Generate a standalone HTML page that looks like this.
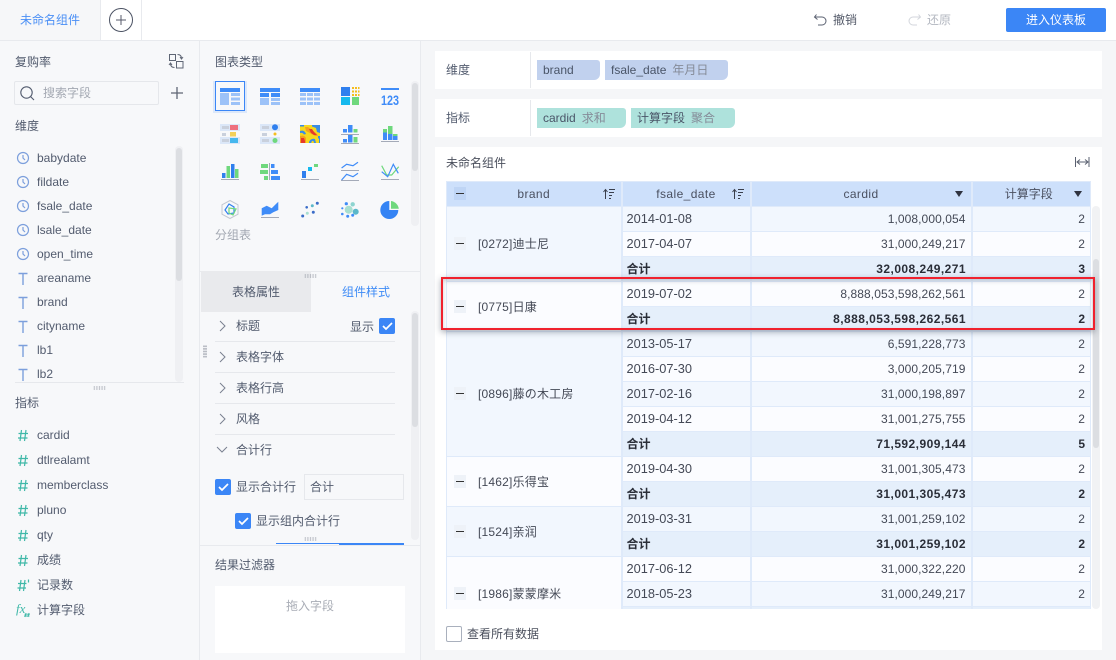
<!DOCTYPE html>
<html lang="zh"><head><meta charset="utf-8"><title>未命名组件</title>
<style>
*{box-sizing:border-box;margin:0;padding:0}
html,body{width:1116px;height:660px;overflow:hidden;background:#f5f6f8}
body{position:relative;font:12px/16px "Liberation Sans","Noto Sans CJK SC",sans-serif;color:#525b6e}
.a{position:absolute}
.t{position:absolute;white-space:nowrap;line-height:16px}
.f{position:absolute;left:37px;white-space:nowrap;line-height:16px}
.c{position:absolute;left:215px;width:16px;height:16px;background:#3b86f6;border-radius:2px}
.sb{position:absolute;width:8px;background:#eff0f3;border-radius:4px}
.sb i{position:absolute;left:1px;width:6px;background:#dcdee2;border-radius:3px;display:block}
.hl{position:absolute;left:215px;width:180px;height:1px;background:#e6e8ec}
.chip{position:absolute;height:20px;line-height:20px;padding-left:6px;border-radius:0 3px 6px 0;white-space:nowrap;color:#4a5568}
.chip b{font-weight:normal;color:#858b98;margin-left:6px}
table{border-collapse:collapse;table-layout:fixed;width:644px;font-size:12px;color:#444956}
td,th{height:25px;border:1px solid #dfeafa;border-left-width:2px;padding:0 5px;font-weight:inherit;white-space:nowrap;overflow:hidden}
td.g,th.h1{border-left-width:1px}
th{background:#cde0fb;text-align:center;color:#4a5060;position:relative;letter-spacing:.4px}
td.n{text-align:right;letter-spacing:.08px}
td.d{font-size:12.800px;padding-left:4px}
.o{background:#f2f7fe}.e{background:#fbfcff}
.s{background:#e5effb;font-weight:bold;color:#2a2e38}
.s td:first-child{padding-left:4px}
.s td.n{letter-spacing:.45px;padding-right:4.500px}
td.g{padding-left:31px;position:relative;font-weight:normal;color:#444956;letter-spacing:.2px}
.m{position:absolute;left:7px;top:50%;margin-top:-7px;width:12px;height:13px;background:#eef2f8}
.m:after{content:"";position:absolute;left:2px;top:6px;width:8px;height:1px;background:#333}
th .m{background:#bfd5f5}
.ss{position:absolute;right:5px;top:5px}
.tri{position:absolute;top:9px;width:0;height:0;border-left:4.500px solid transparent;border-right:4.500px solid transparent;border-top:6px solid #2f3340}
.dots{position:absolute;width:13px;height:4px;background-image:radial-gradient(#8b909c .6px,transparent .8px);background-size:2.600px 2px}
</style></head><body>
<!-- top bar -->
<div class="a" style="left:0;top:0;width:1116px;height:41px;background:#fff;border-bottom:1px solid #e8eaee"></div>
<div class="a" style="left:0;top:0;width:101px;height:40px;background:#f6f7f9;border-right:1px solid #e8eaee"></div>
<div class="a" style="left:141px;top:0;width:1px;height:40px;background:#e8eaee"></div>
<div class="t" style="left:20px;top:12px;color:#4a8ff5">未命名组件</div>
<svg class="a" style="left:108px;top:7px" width="26" height="26"><circle cx="13" cy="13" r="11.500" fill="#fff" stroke="#4b5263" stroke-width="1"/><path d="M13 8v10M8 13h10" stroke="#55596a" stroke-width="1"/></svg>
<svg class="a" style="left:813px;top:12px" width="16" height="16"><path d="M3.500 2.500 1.500 5 4.500 7.500M2 5h7a3.700 3.700 0 0 1 0 8H5" fill="none" stroke="#5a6070" stroke-width="1"/></svg>
<div class="t" style="left:833px;top:12px;color:#555b6a">撤销</div>
<svg class="a" style="left:906px;top:12px" width="16" height="16"><path d="M12.500 2.500 14.500 5 11.500 7.500M14 5H7a3.700 3.700 0 0 0 0 8h4" fill="none" stroke="#d3d6dc" stroke-width="1"/></svg>
<div class="t" style="left:927px;top:12px;color:#b4b8c1">还原</div>
<div class="a" style="left:1006px;top:8px;width:100px;height:24px;background:#3b86f6;border-radius:2px;color:#fff;text-align:center;line-height:24px">进入仪表板</div>

<!-- left panel -->
<div class="a" style="left:0;top:41px;width:200px;height:619px;background:#f7f8fa;border-right:1px solid #e8eaee"></div>
<div class="t" style="left:15px;top:54px">复购率</div>
<svg class="a" style="left:168px;top:53px" width="17" height="17" fill="none" stroke="#5f6675"><path d="M1.500 1.500h6v6h-6zM8.500 8.500h6.500v6.500H8.500zM9.500 1.500c2.500 0 4 1.500 4 4M12 4l1.500 2 1.500-2M6.500 14.500c-2.500 0-4-1.500-4-4M1 12l1.500-2 1.500 2"/></svg>
<div class="a" style="left:14px;top:81px;width:145px;height:24px;border:1px solid #e5e7eb;border-radius:2px"></div>
<svg class="a" style="left:19px;top:85px" width="17" height="17" fill="none" stroke="#525b6e" stroke-width="1.100"><circle cx="7.500" cy="7.500" r="5.700"/><path d="M11.500 11.500l3.500 3.500"/></svg>
<div class="t" style="left:43px;top:85px;color:#a3a8b2">搜索字段</div>
<svg class="a" style="left:170px;top:86px" width="14" height="14"><path d="M7 1v12M1 7h12" stroke="#5f6675" stroke-width="1.300"/></svg>
<div class="t" style="left:15px;top:118px">维度</div>
<div class="sb" style="left:175px;top:146px;height:236px"><i style="top:2px;height:133px"></i></div>
<svg class="a" style="left:15px;top:150px" width="16" height="232" fill="none" stroke="#7c9fdc" stroke-width="1.200">
<g><circle cx="8" cy="8" r="5.500"/><path d="M8 5v3l2 2"/></g>
<g transform="translate(0,24)"><circle cx="8" cy="8" r="5.500"/><path d="M8 5v3l2 2"/></g>
<g transform="translate(0,48)"><circle cx="8" cy="8" r="5.500"/><path d="M8 5v3l2 2"/></g>
<g transform="translate(0,72)"><circle cx="8" cy="8" r="5.500"/><path d="M8 5v3l2 2"/></g>
<g transform="translate(0,96)"><circle cx="8" cy="8" r="5.500"/><path d="M8 5v3l2 2"/></g>
<path d="M3.500 123.500h9M8 123.500v11.500M3.500 147.500h9M8 147.500v11.500M3.500 171.500h9M8 171.500v11.500M3.500 195.500h9M8 195.500v11.500M3.500 219.500h9M8 219.500v11.500" stroke-width="1.400"/></svg>
<div class="f" style="top:150px">babydate</div>
<div class="f" style="top:174px">fildate</div>
<div class="f" style="top:198px">fsale_date</div>
<div class="f" style="top:222px">lsale_date</div>
<div class="f" style="top:246px">open_time</div>
<div class="f" style="top:270px">areaname</div>
<div class="f" style="top:294px">brand</div>
<div class="f" style="top:318px">cityname</div>
<div class="f" style="top:342px">lb1</div>
<div class="f" style="top:366px">lb2</div>
<div class="a" style="left:15px;top:382px;width:169px;height:1px;background:#e6e8ec"></div>
<div class="dots" style="left:93px;top:386px"></div>
<div class="t" style="left:15px;top:395px">指标</div>
<svg class="a" style="left:15px;top:427px" width="18" height="195" fill="none" stroke="#3fb8a8" stroke-width="1.200">
<path d="M6.500 3 5 14M11 3 9.500 14M3.500 6.500h9.500M3 11h9.500"/>
<path transform="translate(0,25)" d="M6.500 3 5 14M11 3 9.500 14M3.500 6.500h9.500M3 11h9.500"/>
<path transform="translate(0,50)" d="M6.500 3 5 14M11 3 9.500 14M3.500 6.500h9.500M3 11h9.500"/>
<path transform="translate(0,75)" d="M6.500 3 5 14M11 3 9.500 14M3.500 6.500h9.500M3 11h9.500"/>
<path transform="translate(0,100)" d="M6.500 3 5 14M11 3 9.500 14M3.500 6.500h9.500M3 11h9.500"/>
<path transform="translate(0,125)" d="M6.500 3 5 14M11 3 9.500 14M3.500 6.500h9.500M3 11h9.500"/>
<path transform="translate(0,150)" d="M6 3 4.500 14M10 3 8.500 14M3 6.500h8.500M2.500 11h8.500M13.500 2.500v3"/>
<path transform="translate(0,175)" d="M11 11 10 15M14 11 13 15M9.500 12.200h5.500M9 14h5.500" stroke-width=".9"/>
</svg>
<svg class="a" style="left:15px;top:600px" width="14" height="18"><text x="1" y="13" font-family="Liberation Serif" font-style="italic" font-size="13" fill="#3fb8a8">fx</text></svg>
<div class="f" style="top:427px">cardid</div>
<div class="f" style="top:452px">dtlrealamt</div>
<div class="f" style="top:477px">memberclass</div>
<div class="f" style="top:502px">pluno</div>
<div class="f" style="top:527px">qty</div>
<div class="f" style="top:552px">成绩</div>
<div class="f" style="top:577px">记录数</div>
<div class="f" style="top:602px">计算字段</div>

<!-- middle panel -->
<div class="a" style="left:200px;top:41px;width:221px;height:619px;background:#f7f8fa;border-right:1px solid #e8eaee"></div>
<div class="t" style="left:215px;top:54px">图表类型</div>
<div class="a" style="left:213px;top:81px;width:34px;height:32px;background:#dce8fa"></div>
<div class="a" style="left:215px;top:81px;width:30px;height:30px;border:1px solid #3b86f6;background:#f7f8fa"></div>
<svg class="a" style="left:205px;top:75px" width="205" height="150" viewBox="205 75 205 150">
<g fill="#3f8cf8">
<rect x="220" y="88" width="20" height="4"/><rect x="260" y="88" width="20" height="4"/><rect x="300" y="88" width="20" height="4"/>
<rect x="260" y="93" width="9" height="4"/><rect x="271" y="93" width="9" height="4"/>
<rect x="381" y="88" width="18" height="2"/>
<rect x="341" y="87" width="9" height="9" fill="#2f7fee"/>
</g>
<g fill="#9cc2f8">
<rect x="220" y="93" width="9" height="12"/><rect x="231" y="93" width="9" height="3"/><rect x="231" y="97.500" width="9" height="3"/><rect x="231" y="102" width="9" height="3"/>
<rect x="260" y="98" width="9" height="7"/><rect x="271" y="98" width="9" height="3"/><rect x="271" y="102" width="9" height="3"/>
<rect x="300" y="93" width="6" height="3"/><rect x="307" y="93" width="6" height="3"/><rect x="314" y="93" width="6" height="3"/>
<rect x="300" y="97.500" width="6" height="3"/><rect x="307" y="97.500" width="6" height="3"/><rect x="314" y="97.500" width="6" height="3"/>
<rect x="300" y="102" width="6" height="3"/><rect x="307" y="102" width="6" height="3"/><rect x="314" y="102" width="6" height="3"/>
</g>
<rect x="341" y="97" width="9" height="8" fill="#16b9ee"/><rect x="352" y="97" width="7" height="8" fill="#6fd87d"/>
<path d="M352 87h2v2h-2zM355 87h2v2h-2zM358 87h1.500v2H358zM352 90.500h2v2h-2zM355 90.500h2v2h-2zM358 90.500h1.500v2H358zM352 94h2v2h-2zM355 94h2v2h-2zM358 94h1.500v2H358z" fill="#f5bd1f"/>
<text x="381" y="105" font-family="Liberation Sans" font-weight="bold" font-size="14" fill="#3f8cf8" textLength="18" lengthAdjust="spacingAndGlyphs">123</text>
<!-- row 2 -->
<rect x="220" y="124" width="20" height="7" fill="#dbe7f8"/><rect x="220" y="137" width="20" height="7" fill="#dbe7f8"/>
<rect x="260" y="124" width="20" height="7" fill="#dbe7f8"/><rect x="260" y="137" width="20" height="7" fill="#dbe7f8"/>
<g fill="#c9d0dc"><rect x="222" y="126" width="7" height="3"/><rect x="222" y="133" width="4" height="3"/><rect x="222" y="139" width="7" height="3"/><rect x="262" y="126" width="7" height="3"/><rect x="262" y="133" width="5" height="3"/><rect x="262" y="139" width="7" height="3"/></g>
<rect x="230" y="125" width="8" height="5" fill="#ee6f7d"/><rect x="230" y="132" width="6" height="4.500" fill="#f2d05a"/><rect x="230" y="138" width="8" height="5" fill="#45b7ee"/>
<circle cx="275" cy="127.300" r="3" fill="#2f7fee"/><circle cx="275" cy="134" r="1.500" fill="#f5bd1f"/><circle cx="275" cy="140.500" r="2.500" fill="#6fd87d"/>
<rect x="300" y="125" width="20" height="18" fill="#f6d81c"/>
<path d="M300 125h4v1.500h-4zM312 125h8v8l-3-1-1-4-4-1.500zM300 131c3-1 5 0 6 3l-2 .5c-1-1.500-2-2-4-1.500zM300 143v-1h1v1zM309 143c0-3 3-5 6-4l1 4h-2c0-2-1-2.500-2-2l-1 2zM318 136h2v7h-1v-4l-1-1z" fill="#3a8ce6"/>
<path d="M305 127h3l4 3 5 4 1 2-3 0-5-3-4-2zM300 136c3-1 6 0 6 3v4h-6z" fill="#f6a11d"/>
<path d="M309 129l3 0 2 3 3 3-3 0-3-2zM301 138l3 0 1 3v2h-4z" fill="#e6392a"/>
<g fill="#3f8cf8"><rect x="343" y="129" width="4" height="3.500"/><rect x="348" y="125" width="4.500" height="7.500"/><rect x="343" y="139" width="4" height="3.500"/><rect x="348" y="134" width="4.500" height="8.500"/><rect x="383" y="132.500" width="4" height="7.500"/><rect x="388" y="134" width="4.500" height="6"/><rect x="393" y="136" width="4.500" height="4"/></g>
<g fill="#6fd87d"><rect x="353.500" y="129" width="4" height="3.500"/><rect x="353.500" y="137" width="4" height="5.500"/><rect x="383" y="129" width="4" height="3.500"/><rect x="388" y="126" width="4.500" height="8"/><rect x="393" y="134" width="4.500" height="2"/></g>
<g fill="#a4aab8"><rect x="341" y="134" width="18" height="1"/><rect x="341" y="143" width="18" height="1"/><rect x="381" y="141" width="18" height="1"/><rect x="221" y="179" width="18" height="1"/><rect x="301" y="179" width="18" height="1"/><rect x="381" y="179" width="18" height="1"/><rect x="341" y="170" width="18" height="1"/><rect x="341" y="180" width="18" height="1"/><rect x="261" y="217" width="18" height="1"/></g>
<!-- row 3 -->
<g fill="#2f7fee"><rect x="222" y="173" width="3.500" height="5"/><rect x="231" y="164" width="3.500" height="14"/></g>
<g fill="#6fd87d"><rect x="226.500" y="166" width="3.500" height="12"/><rect x="235" y="169" width="3.500" height="9"/></g>
<g fill="#6fd87d"><rect x="261" y="164" width="7" height="4"/><rect x="260" y="170" width="8" height="4"/><rect x="264" y="176" width="4" height="4"/></g>
<rect x="269" y="163" width="1" height="17" fill="#a4aab8"/>
<g fill="#3f8cf8"><rect x="271" y="164" width="3.500" height="4"/><rect x="271" y="170" width="7" height="4"/><rect x="271" y="176" width="9" height="4"/></g>
<rect x="302" y="171" width="4" height="7" fill="#2f7fee"/><rect x="308" y="167" width="4" height="4" fill="#16b9ee"/><rect x="314" y="164" width="4" height="3" fill="#6fd87d"/>
<g fill="none" stroke-width="1.200"><path d="M341.600 168 346.600 164.300 353 165.700 358 162.300M341.600 180 346.600 174.300 353 176.700 358 173.300" stroke="#3f8cf8"/><path d="M381.700 165.700 386.700 175H391.700L398.700 166.700" stroke="#6fd87d"/><path d="M381.700 171.700 387.700 176.700 393.300 164.300 398.300 173.300" stroke="#3f8cf8"/></g>
<!-- row 4 -->
<path d="M230 200.500l8 4.300v9.400l-8 4.300-8-4.300v-9.400z" fill="none" stroke="#c3c8d1" stroke-width="1"/>
<path d="M229 204l5 3 0 6-6 1-3-4z" fill="none" stroke="#2f7fee" stroke-width="1.200"/><path d="M229 208l7 1-3 6-4-2z" fill="none" stroke="#6fd87d" stroke-width="1.200"/>
<path d="M261.700 208.300 266.700 205.700 271.700 208.300 275.700 204.300 278.300 201.700V210L273.300 212.300 270 214.300H265L261.700 215.700z" fill="#3f8cf8"/>
<g fill="#3a6cc8"><circle cx="302.700" cy="216" r="1.500"/><circle cx="306.700" cy="207.300" r="1.300"/><circle cx="313.300" cy="212.300" r="1.500"/><circle cx="317.300" cy="203.300" r="1.500"/></g><circle cx="312.300" cy="205.700" r="1.500" fill="#5bb8c9"/><circle cx="307.300" cy="213.300" r="1.500" fill="#a8dfd0"/>
<circle cx="348.700" cy="209.700" r="4" fill="#a8dfd0"/><circle cx="355.700" cy="211.700" r="3" fill="#5bb8c9"/><circle cx="352.700" cy="204.300" r="2.200" fill="#8dd4d0"/>
<g fill="#3f8cf8"><circle cx="346.300" cy="203.700" r="1.600"/><circle cx="342.300" cy="208.300" r="1.100"/><circle cx="342.300" cy="214" r="1.300"/><circle cx="347.700" cy="216.300" r="1.500"/><circle cx="352.700" cy="215.300" r="1.500"/></g>
<path d="M389.300 201a9 9 0 1 0 9 9h-9z" fill="#3584f4"/><path d="M391 201a9 9 0 0 1 7.800 7.800H391z" fill="#6fd87d"/>
</svg>
<div class="t" style="left:215px;top:227px;color:#a3a8b2">分组表</div>
<div class="sb" style="left:411px;top:81px;height:145px"><i style="top:2px;height:88px"></i></div>
<div class="a" style="left:200px;top:271px;width:220px;height:1px;background:#e8eaee"></div>
<div class="a" style="left:201px;top:271px;width:110px;height:41px;background:#e9eaed"></div>
<div class="dots" style="left:304px;top:274px"></div>
<div class="t" style="left:232px;top:284px">表格属性</div>
<div class="t" style="left:342px;top:284px;color:#3f8cf6">组件样式</div>
<svg class="a" style="left:216px;top:318px" width="16" height="145" fill="none" stroke="#7a8190" stroke-width="1">
<path d="M4 3l5 5-5 5M4 34l5 5-5 5M4 65l5 5-5 5M4 96l5 5-5 5M1 129l5 5 5-5"/></svg>
<div class="t" style="left:236px;top:318px">标题</div>
<div class="t" style="left:350px;top:319px">显示</div>
<div class="c" style="left:379px;top:318px"></div>
<div class="hl" style="top:341px"></div>
<div class="t" style="left:236px;top:349px">表格字体</div>
<div class="hl" style="top:372px"></div>
<div class="t" style="left:236px;top:380px">表格行高</div>
<div class="hl" style="top:403px"></div>
<div class="t" style="left:236px;top:411px">风格</div>
<div class="hl" style="top:434px"></div>
<div class="t" style="left:236px;top:442px">合计行</div>
<div class="c" style="top:479px"></div>
<div class="t" style="left:236px;top:479px">显示合计行</div>
<div class="a" style="left:304px;top:474px;width:100px;height:26px;border:1px solid #e6e8ec;padding-left:5px;line-height:24px">合计</div>
<div class="c" style="left:235px;top:513px"></div>
<div class="t" style="left:256px;top:513px">显示组内合计行</div>
<svg class="a" style="left:215px;top:318px" width="185" height="215" fill="none" stroke="#fff" stroke-width="1.700"><path d="M168 8l3 3 6-6M4 169l3 3 6-6M24 203l3 3 6-6"/></svg>
<div class="sb" style="left:411px;top:311px;height:229px"><i style="top:2px;height:114px"></i></div>
<div class="a" style="left:203px;top:345px;width:4px;height:13px;background-image:radial-gradient(#8b909c .6px,transparent .8px);background-size:2px 2.600px"></div>
<div class="dots" style="left:304px;top:537px"></div>
<div class="a" style="left:276px;top:543px;width:63px;height:1px;background:#3b86f6"></div>
<div class="a" style="left:339px;top:543px;width:65px;height:2px;background:#3b86f6"></div>
<div class="a" style="left:200px;top:545px;width:220px;height:1px;background:#e8eaee"></div>
<div class="t" style="left:215px;top:557px">结果过滤器</div>
<div class="a" style="left:215px;top:586px;width:190px;height:67px;background:#fff;color:#a9adb6;text-align:center;padding-top:12px">拖入字段</div>

<!-- right cards -->
<div class="a" style="left:435px;top:51px;width:667px;height:38px;background:#fff"></div>
<div class="a" style="left:530px;top:52px;width:1px;height:36px;background:#e6e8ec"></div>
<div class="t" style="left:446px;top:62px">维度</div>
<div class="chip" style="left:537px;top:60px;width:63px;background:#c1d1ee">brand</div>
<div class="chip" style="left:605px;top:60px;width:123px;background:#c1d1ee">fsale_date<b>年月日</b></div>
<div class="a" style="left:435px;top:99px;width:667px;height:38px;background:#fff"></div>
<div class="a" style="left:530px;top:100px;width:1px;height:36px;background:#e6e8ec"></div>
<div class="t" style="left:446px;top:110px">指标</div>
<div class="chip" style="left:537px;top:108px;width:89px;background:#aee2dc">cardid<b>求和</b></div>
<div class="chip" style="left:631px;top:108px;width:104px;background:#aee2dc">计算字段<b>聚合</b></div>
<div class="a" style="left:435px;top:147px;width:667px;height:503px;background:#fff"></div>
<div class="t" style="left:446px;top:155px;color:#4a4f5c">未命名组件</div>
<svg class="a" style="left:1075px;top:156px" width="15" height="12" fill="none" stroke="#5a6070"><path d="M.500 1v10M14 1v10M2 6h11M5 3.500 2 6l3 2.500M10 3.500 13 6l-3 2.500"/></svg>

<div class="a" style="left:446px;top:181px;width:645px;height:428px;overflow:hidden">
<table>
<colgroup><col style="width:175px"><col style="width:129px"><col style="width:221px"><col style="width:119px"></colgroup>
<tr><th class="h1">brand<span class="m"></span><svg class="ss" width="14" height="14" fill="none" stroke="#3a3f4c"><path d="M3.500 12V3M1.500 5l2-2.500 2 2.500M7 2.500h6M7 5.500h5M7 8.500h3M7 11.500h2"/></svg></th><th>fsale_date<svg class="ss" width="14" height="14" fill="none" stroke="#3a3f4c"><path d="M3.500 12V3M1.500 5l2-2.500 2 2.500M7 2.500h6M7 5.500h5M7 8.500h3M7 11.500h2"/></svg></th><th>cardid<span class="tri" style="right:8px"></span></th><th style="padding-left:0;letter-spacing:0">计算字段<span class="tri" style="right:8px"></span></th></tr>
<tr class="o"><td class="g" rowspan="3"><span class="m"></span>[0272]迪士尼</td><td class="d">2014-01-08</td><td class="n">1,008,000,054</td><td class="n">2</td></tr>
<tr class="e"><td class="d">2017-04-07</td><td class="n">31,000,249,217</td><td class="n">2</td></tr>
<tr class="s"><td>合计</td><td class="n">32,008,249,271</td><td class="n">3</td></tr>
<tr class="e"><td class="g" rowspan="2"><span class="m"></span>[0775]日康</td><td class="d">2019-07-02</td><td class="n">8,888,053,598,262,561</td><td class="n">2</td></tr>
<tr class="s"><td>合计</td><td class="n">8,888,053,598,262,561</td><td class="n">2</td></tr>
<tr class="o"><td class="g" rowspan="5"><span class="m"></span>[0896]藤の木工房</td><td class="d">2013-05-17</td><td class="n">6,591,228,773</td><td class="n">2</td></tr>
<tr class="e"><td class="d">2016-07-30</td><td class="n">3,000,205,719</td><td class="n">2</td></tr>
<tr class="o"><td class="d">2017-02-16</td><td class="n">31,000,198,897</td><td class="n">2</td></tr>
<tr class="e"><td class="d">2019-04-12</td><td class="n">31,001,275,755</td><td class="n">2</td></tr>
<tr class="s"><td>合计</td><td class="n">71,592,909,144</td><td class="n">5</td></tr>
<tr class="e"><td class="g" rowspan="2"><span class="m"></span>[1462]乐得宝</td><td class="d">2019-04-30</td><td class="n">31,001,305,473</td><td class="n">2</td></tr>
<tr class="s"><td>合计</td><td class="n">31,001,305,473</td><td class="n">2</td></tr>
<tr class="o"><td class="g" rowspan="2"><span class="m"></span>[1524]亲润</td><td class="d">2019-03-31</td><td class="n">31,001,259,102</td><td class="n">2</td></tr>
<tr class="s"><td>合计</td><td class="n">31,001,259,102</td><td class="n">2</td></tr>
<tr class="e"><td class="g" rowspan="3"><span class="m"></span>[1986]蒙蒙摩米</td><td class="d">2017-06-12</td><td class="n">31,000,322,220</td><td class="n">2</td></tr>
<tr class="o"><td class="d">2018-05-23</td><td class="n">31,000,249,217</td><td class="n">2</td></tr>
<tr class="s"><td></td><td class="n"></td><td class="n"></td></tr>
</table>
</div>
<div class="sb" style="left:1092px;top:206px;height:403px;background:#f1f2f4"><i style="top:53px;height:189px"></i></div>
<div class="a" style="left:441px;top:277px;width:654px;height:53px;border:2px solid #f0222e;box-shadow:0 2px 6px rgba(60,70,90,.45),inset 0 2px 4px rgba(60,70,90,.25)"></div>
<div class="a" style="left:446px;top:626px;width:16px;height:16px;border:1px solid #a9b0bd;border-radius:2px;background:#fff"></div>
<div class="t" style="left:467px;top:626px;color:#4a4f5c">查看所有数据</div>
</body></html>
